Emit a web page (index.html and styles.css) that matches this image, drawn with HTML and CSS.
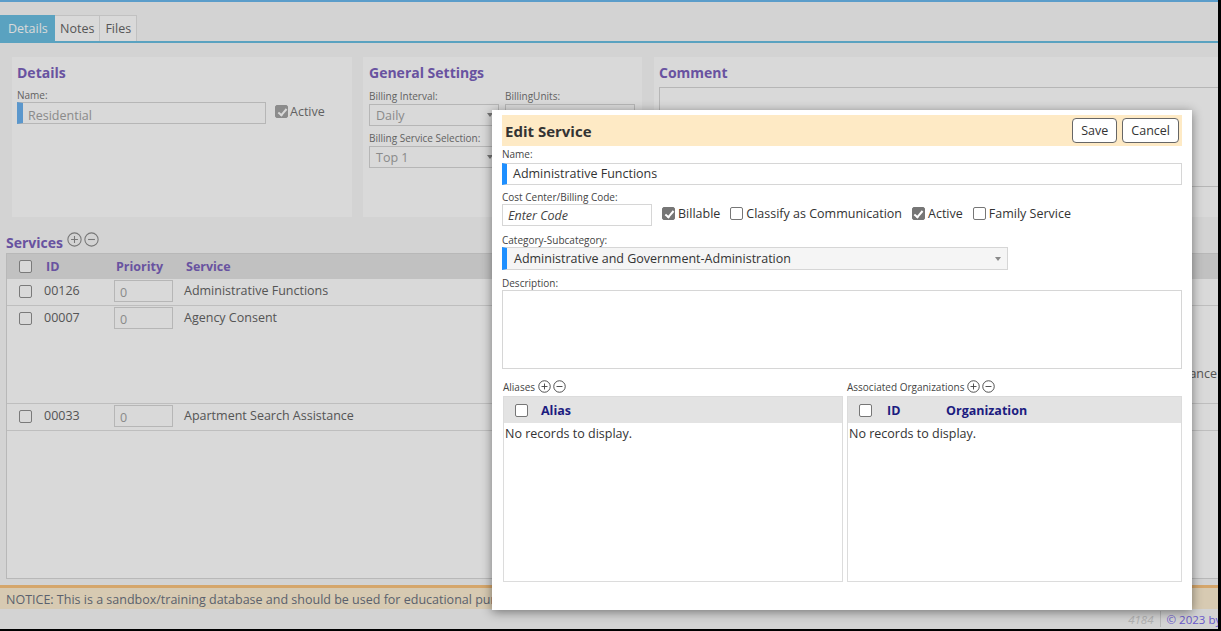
FILE: index.html
```html
<!DOCTYPE html>
<html lang="en">
<head>
<meta charset="utf-8">
<title>Service Group - Details</title>
<link rel="stylesheet" href="styles.css">
</head>
<body>
<div class="app">
  <div class="page">
    <div class="topline"></div>
    <nav class="tabs">
      <div class="tab active">Details</div>
      <div class="tab">Notes</div>
      <div class="tab">Files</div>
    </nav>

    <div class="panels">
      <section class="panel p-details">
        <h2 class="ptitle">Details</h2>
        <div class="lbl">Name:</div>
        <div class="frow">
          <div class="input req name-input">Residential</div>
          <span class="cb dis checked"></span><span class="cbl">Active</span>
        </div>
      </section>
      <section class="panel p-general">
        <h2 class="ptitle">General Settings</h2>
        <div class="gs-grid">
          <div>
            <div class="lbl">Billing Interval:</div>
            <div class="select">Daily<i class="arrow"></i></div>
          </div>
          <div>
            <div class="lbl">BillingUnits:</div>
            <div class="input"></div>
          </div>
          <div>
            <div class="lbl">Billing Service Selection:</div>
            <div class="select">Top 1<i class="arrow"></i></div>
          </div>
        </div>
      </section>
      <section class="panel p-comment">
        <h2 class="ptitle">Comment</h2>
        <div class="textarea"></div>
      </section>
    </div>

    <div class="services">
      <h2 class="stitle">Services
        <svg class="ic ic-grey" viewBox="0 0 14 14"><circle cx="7" cy="7" r="6.2"/><path d="M3.8 7h6.4M7 3.8v6.4"/></svg>
        <svg class="ic ic-grey" viewBox="0 0 14 14"><circle cx="7" cy="7" r="6.2"/><path d="M3.8 7h6.4"/></svg>
      </h2>
      <div class="sgrid">
        <div class="srow shead">
          <div class="c1"><span class="cb"></span></div>
          <div class="c2">ID</div>
          <div class="c3">Priority</div>
          <div class="c4">Service</div>
          <div class="c5"></div>
          <div class="c6"></div>
        </div>
        <div class="srow sbody">
          <div class="c1"><span class="cb"></span></div>
          <div class="c2">00126</div>
          <div class="c3"><div class="prio">0</div></div>
          <div class="c4">Administrative Functions</div>
          <div class="c5"></div>
          <div class="c6"></div>
        </div>
        <div class="srow sbody tall">
          <div class="c1"><span class="cb"></span></div>
          <div class="c2">00007</div>
          <div class="c3"><div class="prio">0</div></div>
          <div class="c4">Agency Consent</div>
          <div class="c5 desc">
            <div>Consent obtained from the agency</div>
            <div>prior to the release of information</div>
            <div>for program referrals and</div>
            <div class="line-end">coordination of housing assistance</div>
            <div>services.</div>
          </div>
          <div class="c6"></div>
        </div>
        <div class="srow sbody">
          <div class="c1"><span class="cb"></span></div>
          <div class="c2">00033</div>
          <div class="c3"><div class="prio">0</div></div>
          <div class="c4">Apartment Search Assistance</div>
          <div class="c5"></div>
          <div class="c6"></div>
        </div>
      </div>
    </div>

    <div class="notice">NOTICE: This is a sandbox/training database and should be used for educational purposes only.</div>
    <footer class="foot">
      <span class="ver">4184</span><span class="sep"></span><span class="copy">© 2023 by Company Inc.</span>
    </footer>
  </div>

  <div class="backdrop"></div>

  <div class="modal">
    <div class="mhead">
      <h3>Edit Service</h3>
      <div class="btns">
        <button class="btn">Save</button>
        <button class="btn">Cancel</button>
      </div>
    </div>
    <div class="mlbl">Name:</div>
    <div class="minput mreq">Administrative Functions</div>
    <div class="mlbl gap-cost">Cost Center/Billing Code:</div>
    <div class="mrow">
      <div class="minput code">Enter Code</div>
      <label class="chk"><span class="cb m checked"></span>Billable</label>
      <label class="chk"><span class="cb m"></span>Classify as Communication</label>
      <label class="chk"><span class="cb m checked"></span>Active</label>
      <label class="chk"><span class="cb m"></span>Family Service</label>
    </div>
    <div class="mlbl gap-cat">Category-Subcategory:</div>
    <div class="mselect mreq">Administrative and Government-Administration<i class="arrow"></i></div>
    <div class="mlbl gap-desc">Description:</div>
    <div class="mtextarea"></div>

    <div class="subs">
      <div class="sub">
        <div class="subtitle">Aliases
          <svg class="ic ic-dark" viewBox="0 0 14 14"><circle cx="7" cy="7" r="6.2"/><path d="M3.8 7h6.4M7 3.8v6.4"/></svg>
          <svg class="ic ic-dark" viewBox="0 0 14 14"><circle cx="7" cy="7" r="6.2"/><path d="M3.8 7h6.4"/></svg>
        </div>
        <div class="sg">
          <div class="sg-head"><span class="cb m"></span><span class="h-alias">Alias</span></div>
          <div class="sg-empty">No records to display.</div>
        </div>
      </div>
      <div class="sub">
        <div class="subtitle">Associated Organizations
          <svg class="ic ic-dark" viewBox="0 0 14 14"><circle cx="7" cy="7" r="6.2"/><path d="M3.8 7h6.4M7 3.8v6.4"/></svg>
          <svg class="ic ic-dark" viewBox="0 0 14 14"><circle cx="7" cy="7" r="6.2"/><path d="M3.8 7h6.4"/></svg>
        </div>
        <div class="sg">
          <div class="sg-head"><span class="cb m"></span><span class="h-id">ID</span><span>Organization</span></div>
          <div class="sg-empty">No records to display.</div>
        </div>
      </div>
    </div>
  </div>
</div>
</body>
</html>
```

FILE: styles.css
```css
* { box-sizing: border-box; }
html, body { margin: 0; padding: 0; }
body {
  background: #000;
  font-family: "Open Sans", "Liberation Sans", sans-serif;
  font-size: 12.5px;
  color: #333;
}
.app {
  position: relative;
  width: 1218px;
  height: 629px;
  overflow: hidden;
  background: #f8f8f8;
}
.page { width: 1300px; }
.topline { height: 2px; background: #6cb9ee; }

/* tabs */
.tabs {
  display: flex;
  margin-top: 13px;
  height: 28px;
  border-bottom: 2px solid #6abfe2;
}
.tab {
  height: 26px;
  line-height: 25px;
  padding: 0 5px;
  border: 1px solid #e3e3e3;
  border-bottom: none;
  background: #fff;
  color: #666;
}
.tab + .tab { border-left: none; }
.tab.active {
  background: #6abfe2;
  border-color: #6abfe2;
  color: #fff;
  padding: 0 7px;
  width: 55px;
}

/* top panels */
.panels {
  display: flex;
  margin-top: 14px;
  padding-left: 12px;
  height: 160px;
}
.panel { background: #fff; padding: 0 5px; flex: none; }
.p-details { width: 340px; }
.p-general { width: 279px; margin-left: 11px; padding-left: 6px; }
.p-comment { width: 640px; margin-left: 12px; }
.ptitle {
  margin: 6px 0 0;
  font-size: 14px;
  line-height: 19px;
  font-weight: 700;
  color: #7b62bd;
}
.lbl {
  font-size: 10px;
  line-height: 13px;
  color: #737373;
  margin-top: 7px;
}
.frow { display: flex; align-items: flex-start; }
.input {
  height: 22px;
  border: 1px solid #d6d6d6;
  background: #fff;
  line-height: 20px;
  padding-left: 8px;
  color: #a3a3a3;
}
.input.req { border-left: 6px solid #6cb2f0; padding-left: 5px; }
.name-input { width: 249px; line-height: 25px; }
.frow .cb { margin: 3px 0 0 9px; }
.cbl { margin-left: 2px; color: #737373; line-height: 19px; }

.gs-grid {
  display: grid;
  grid-template-columns: 130px 130px;
  column-gap: 6px;
}
.gs-grid .lbl { margin-top: 8px; }
.gs-grid .lbl + .select,
.gs-grid .lbl + .input { margin-top: 1px; }
.gs-grid > div:nth-child(3) .lbl { margin-top: 6px; }
.select {
  height: 22px;
  border: 1px solid #d6d6d6;
  background: #fff;
  color: #a3a3a3;
  padding: 0 5px 0 6px;
  display: flex;
  align-items: center;
  justify-content: space-between;
}
.arrow {
  width: 0;
  height: 0;
  border-left: 3.5px solid transparent;
  border-right: 3.5px solid transparent;
  border-top: 4px solid #8a8a8a;
}
.textarea {
  margin-top: 5px;
  height: 100px;
  border: 1px solid #d6d6d6;
  background: #fff;
}

/* services */
.services { padding-left: 6px; }
.stitle {
  display: flex;
  align-items: flex-start;
  margin: 16px 0 1px;
  font-size: 14px;
  line-height: 19px;
  font-weight: 700;
  color: #7b62bd;
}
.ic { width: 14px; height: 14px; fill: none; stroke-width: 1; }
.ic-grey { stroke: #8c8c8c; width: 15px; height: 15px; margin-top: -1px; }
.stitle .ic:first-of-type { margin-left: 4px; }
.stitle .ic + .ic { margin-left: 2px; }
.sgrid {
  height: 326px;
  border: 1px solid #d9d9d9;
  background: #fff;
}
.srow {
  display: grid;
  grid-template-columns: 33px 70px 70px 560px 480px 1fr;
  border-bottom: 1px solid #e0e0e0;
}
.shead {
  height: 25px;
  background: #e3e3e3;
  align-items: center;
  font-weight: 700;
  color: #7b62bd;
  border-bottom: none;
}
.shead > div { padding-left: 6px; }
.shead .c1 { padding-left: 12px; display: flex; }
.sbody { padding: 1px 0 3px; color: #646464; align-items: start; }
.sbody.tall { padding-bottom: 1px; }
.sbody > div { padding-left: 4px; line-height: 22px; }
.sbody .c1 { padding-left: 12px; padding-top: 5px; line-height: 0; }
.prio {
  width: 59px;
  height: 22px;
  border: 1px solid #d6d6d6;
  padding-left: 5px;
  line-height: 24px;
  color: #a3a3a3;
}
.tall .desc { line-height: 19px; padding-right: 3px; white-space: nowrap; overflow: hidden; }
.tall .desc > div { overflow: hidden; }
.line-end { text-align: right; }

/* notice + footer */
.notice {
  margin-top: 6px;
  border-top: 3px solid #fbc47e;
  background: #fdeed2;
  height: 24px;
  line-height: 23px;
  padding-left: 6px;
  color: #6b7280;
  overflow: hidden;
}
.foot {
  height: 20px;
  display: flex;
  align-items: center;
  justify-content: flex-end;
  padding-right: 3px;
  font-size: 11.5px;
}
.ver { color: #cfcfcf; font-style: italic; }
.sep { width: 1px; height: 16px; background: #d8d8d8; margin: 0 6px; }
.copy { color: #7b68ee; }

/* checkboxes */
.cb {
  display: inline-block;
  position: relative;
  width: 13px;
  height: 13px;
  border: 1px solid #909090;
  border-radius: 2px;
  background: #fff;
  flex: none;
}
.cb.dis.checked { background: #a5a5a5; border-color: #a5a5a5; }
.cb.m { border-color: #767676; }
.cb.m.checked { background: #767676; }
.cb.checked::after {
  content: "";
  position: absolute;
  left: 3.5px;
  top: 1px;
  width: 3px;
  height: 7px;
  border-right: 2px solid #fff;
  border-bottom: 2px solid #fff;
  transform: rotate(40deg);
}

/* overlay */
.backdrop {
  position: absolute;
  inset: 0;
  background: rgba(0, 0, 0, 0.15);
}

/* modal */
.modal {
  position: absolute;
  left: 492px;
  top: 110px;
  width: 700px;
  height: 500px;
  background: #fff;
  padding: 5px 10px 28px;
  box-shadow: 0 2px 10px rgba(0, 0, 0, 0.45);
}
.mhead {
  height: 31px;
  background: #feeac5;
  display: flex;
  align-items: center;
  justify-content: space-between;
  padding: 0 3px;
}
.mhead h3 { margin: 0; font-size: 15px; font-weight: 700; color: #333; }
.btns { display: flex; gap: 5px; }
.btn {
  height: 25px;
  padding: 0 8px;
  border: 1px solid #666;
  border-radius: 4px;
  background: #fff;
  font-family: "Open Sans", "Liberation Sans", sans-serif;
  font-size: 12.5px;
  color: #333;
}
.mlbl {
  font-size: 10px;
  line-height: 14px;
  color: #444;
  margin-top: 1px;
}
.mlbl.gap-cost { margin-top: 5px; }
.mlbl.gap-cat { margin-top: 7px; }
.mlbl.gap-desc { margin-top: 6px; }
.minput {
  height: 22px;
  margin-top: 2px;
  border: 1px solid #d6d6d6;
  line-height: 20px;
  padding-left: 6px;
  color: #333;
}
.mreq { border-left: 5px solid #1e8fff; }
.mrow { display: flex; align-items: flex-start; }
.minput.code {
  width: 150px;
  margin-top: 0;
  padding-left: 5px;
  font-style: italic;
  color: #444;
  line-height: 22px;
}
.chk { display: flex; align-items: center; height: 18px; margin-left: 10px; color: #333; }
.chk .cb { margin-right: 3px; }
.mselect {
  width: 506px;
  height: 23px;
  border: 1px solid #d6d6d6;
  border-left: 5px solid #1e8fff;
  background: #f5f5f5;
  display: flex;
  align-items: center;
  justify-content: space-between;
  padding: 0 6px 0 7px;
  color: #333;
}
.mtextarea { height: 79px; border: 1px solid #d6d6d6; }

.subs {
  display: grid;
  grid-template-columns: 340px 335px;
  column-gap: 4px;
  margin-left: 1px;
  margin-top: 8px;
}
.subtitle {
  height: 19px;
  display: flex;
  align-items: center;
  font-size: 10px;
  color: #444;
}
.ic-dark { stroke: #444; width: 13px; height: 13px; }
.subtitle .ic:first-of-type { margin-left: 3px; }
.subtitle .ic + .ic { margin-left: 2px; }
.sg { height: 186px; border: 1px solid #dcdcdc; }
.sg-head {
  height: 26px;
  background: #e3e3e3;
  display: flex;
  align-items: center;
  padding-left: 11px;
  font-weight: 700;
  color: #1c1c80;
}
.h-alias { margin-left: 13px; }
.h-id { margin-left: 15px; width: 59px; }
.sg-empty { padding-left: 1px; line-height: 22px; color: #333; }
```
